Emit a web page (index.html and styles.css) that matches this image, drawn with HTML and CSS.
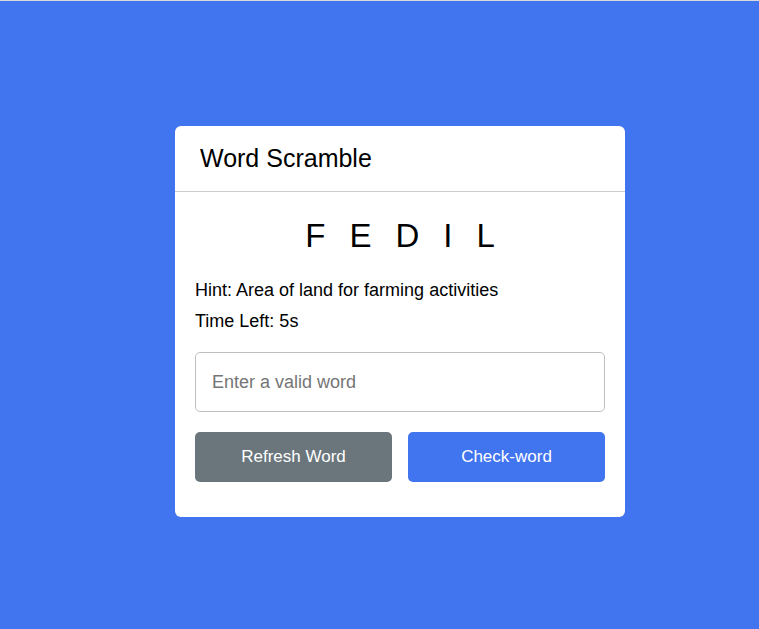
FILE: index.html
```html
<!DOCTYPE html>
<html lang="en">
<head>
<meta charset="utf-8">
<title>Word Scramble</title>
<link rel="stylesheet" href="styles.css">
</head>
<body>
  <div class="container">
    <h2 class="title">Word Scramble</h2>
    <div class="content">
      <p class="word">fedil</p>
      <div class="details">
        <p class="hint">Hint: <span>Area of land for farming activities</span></p>
        <p class="time">Time Left: <span><b>5</b>s</span></p>
      </div>
      <input class="answer" type="text" spellcheck="false" placeholder="Enter a valid word">
      <div class="buttons">
        <button class="refresh-word">Refresh Word</button>
        <button class="check-word">Check-word</button>
      </div>
    </div>
  </div>
</body>
</html>
```
FILE: styles.css
```css
* {
  margin: 0;
  padding: 0;
  box-sizing: border-box;
  font-family: "Liberation Sans", Arial, sans-serif;
}
html {
  background: #4174ef;
  border-top: 1px solid #d9d9d9;
}
body {
  min-height: 628px;
  padding: 125px 0 0 175px;
  background: #4174ef;
}
.container {
  display: flow-root;
  width: 450px;
  background: #fff;
  border-radius: 6px;
}
.title {
  font-size: 25px;
  font-weight: 400;
  line-height: 33px;
  padding: 16px 25px;
  border-bottom: 1px solid #ccc;
  color: #000;
}
.content {
  margin: 25px 20px 35px;
}
.word {
  font-size: 33px;
  font-weight: 400;
  text-align: center;
  letter-spacing: 24px;
  margin-right: -24px;
  text-transform: uppercase;
  color: #000;
}
.details {
  margin: 25px 0 20px;
}
.details p {
  font-size: 18px;
  margin-bottom: 10px;
  color: #000;
}
.details p b {
  font-weight: 400;
}
.answer {
  display: block;
  width: 100%;
  height: 60px;
  outline: none;
  padding: 0 16px;
  font-size: 18px;
  border-radius: 5px;
  border: 1px solid #bfbfbf;
  color: #000;
}
.answer::placeholder {
  color: #757575;
}
.buttons {
  display: flex;
  justify-content: space-between;
  margin-top: 20px;
}
.buttons button {
  border: none;
  outline: none;
  color: #fff;
  cursor: pointer;
  padding: 15px 0;
  font-size: 17px;
  border-radius: 5px;
  width: calc(50% - 8px);
}
.refresh-word {
  background: #6a767c;
}
.check-word {
  background: #4174ef;
}
```
